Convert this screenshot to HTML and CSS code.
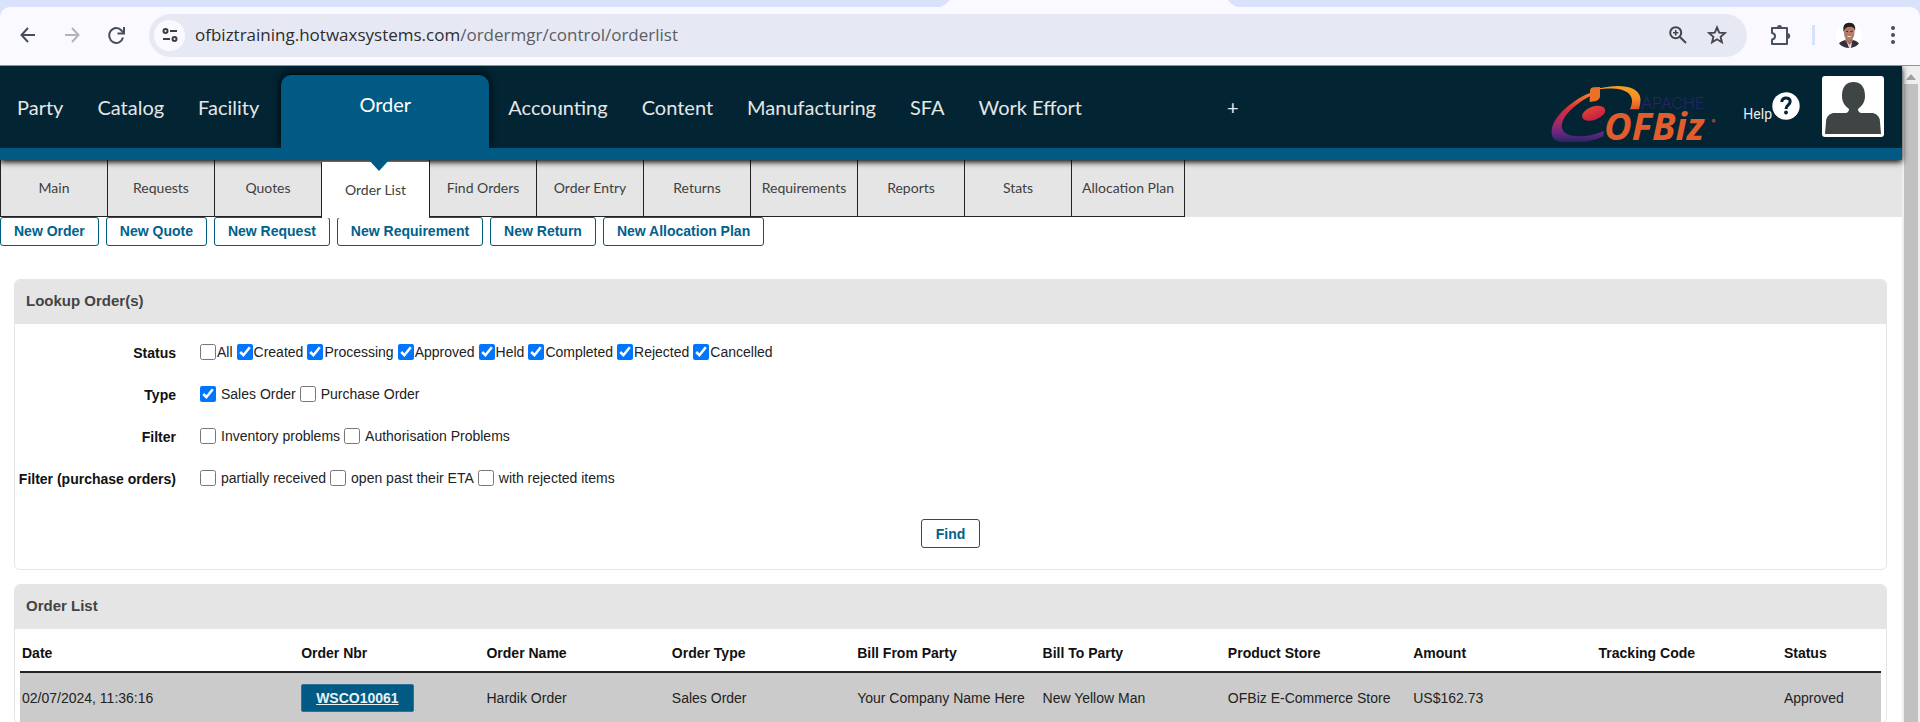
FILE: index.html
```html
<!DOCTYPE html>
<html lang="en">
<head>
<meta charset="utf-8">
<title>OFBiz: Order Manager: Order List</title>
<link rel="stylesheet" href="styles.css">
</head>
<body>
<div class="browser">
  <div class="tabstrip"><span class="active-tab"></span></div>
  <div class="toolbar">
    <button class="tool" type="button" aria-label="Back"><svg width="16" height="20" viewBox="0 0 16 20"><path d="M15 10H2M8 3L1.500 10L8 17" fill="none" stroke="#474d5c" stroke-width="2"/></svg></button>
    <button class="tool" type="button" aria-label="Forward"><svg width="16" height="20" viewBox="0 0 16 20"><path d="M1 10H14M8 3L14.500 10L8 17" fill="none" stroke="#b2b2b8" stroke-width="2"/></svg></button>
    <button class="tool" type="button" aria-label="Reload"><svg width="17" height="20" viewBox="0 0 17 20"><path d="M15 12.500A7 7.500 0 1 1 13.500 5.500L15 7.500" fill="none" stroke="#474d5c" stroke-width="2"/><path d="M16 2V8.500H9.500" fill="none" stroke="#474d5c" stroke-width="2"/></svg></button>
    <div class="omnibox">
      <button class="site-info" type="button" aria-label="Site information"><svg width="16" height="16" viewBox="0 0 16 16" fill="none" stroke="#3b3d42" stroke-width="2"><circle cx="3.500" cy="4" r="2"/><path d="M8 4H15M1 12H8"/><circle cx="12.500" cy="12" r="2"/></svg></button>
      <a class="url" href="#">ofbiztraining.hotwaxsystems.com<span>/ordermgr/control/orderlist</span></a>
      <button class="omni-tool" type="button" aria-label="Zoom"><svg width="18" height="18" viewBox="0 0 18 18" fill="none" stroke="#45464c" stroke-width="2"><circle cx="6.700" cy="6.700" r="5.500"/><path d="M10.700 10.700L17 17"/><path d="M6.700 4V9.400M4 6.700H9.400" stroke-width="1.600"/></svg></button>
      <button class="omni-tool" type="button" aria-label="Bookmark"><svg width="20" height="20" viewBox="0 0 20 20"><path d="M10 2.500L12.200 7.600L17.800 8.100L13.600 11.800L14.900 17.200L10 14.300L5.100 17.200L6.400 11.800L2.200 8.100L7.800 7.600Z" fill="none" stroke="#45464c" stroke-width="1.900"/></svg></button>
    </div>
    <div class="toolbar-end">
      <button class="tool" type="button" aria-label="Extensions"><svg width="22" height="22" viewBox="0 0 22 22"><path d="M3 4H18V20H3V15.500C7 15 7 9.500 3 9Z" fill="none" stroke="#4b505f" stroke-width="2" stroke-linejoin="round"/><path d="M8 4A2.500 3 0 0 1 13 4ZM18 9A3 2.800 0 0 1 18 15Z" fill="#4b505f"/></svg></button>
      <span class="divider"></span>
      <button class="tool" type="button" aria-label="Profile"><svg width="26" height="26" viewBox="0 0 26 26"><defs><clipPath id="round"><circle cx="13" cy="13" r="13"/></clipPath></defs><g clip-path="url(#round)"><rect width="26" height="26" fill="#fff"/><path d="M2 22Q5 19 9 18L13 21L17 18Q22 19 24 23V26H2Z" fill="#33303b"/><path d="M9.500 15H16.500V19L13.500 25L9.500 19Z" fill="#a76d5f"/><path d="M11 20L13 26H15L16 20L13.500 23Z" fill="#e9dce4"/><ellipse cx="13.200" cy="10.800" rx="5.300" ry="7.400" fill="#b57a66"/><path d="M7.500 10Q6 1 12.500 .8Q20.500 0 19 10Q18.500 6 16 5Q10 4 8.500 8Z" fill="#241e21"/><path d="M10 9.500H12M14.500 9.500H16.500" stroke="#493029" stroke-width="1.200"/><path d="M11 14.200Q13.300 16 15.500 14.200Z" fill="#fff"/></g></svg></button>
      <button class="tool" type="button" aria-label="Menu"><svg width="6" height="20" viewBox="0 0 6 20" fill="#474d5c"><circle cx="3" cy="3" r="2"/><circle cx="3" cy="10" r="2"/><circle cx="3" cy="17" r="2"/></svg></button>
    </div>
  </div>
</div>
<div class="viewport">
  <div class="page">
    <header class="masthead">
      <nav class="apps">
        <a href="#">Party</a><a href="#">Catalog</a><a href="#">Facility</a><a class="selected" href="#">Order</a><a href="#">Accounting</a><a href="#">Content</a><a href="#">Manufacturing</a><a href="#">SFA</a><a href="#">Work Effort</a><a class="more" href="#">+</a>
      </nav>
      <div class="controls">
        <svg class="logo" width="168" height="60" viewBox="30 30 504 180" role="img" aria-label="Apache OFBiz">
          <defs>
            <linearGradient id="swirl" x1="0" y1="0" x2="0" y2="1"><stop offset="0" stop-color="#f38b27"/><stop offset=".3" stop-color="#dc3038"/><stop offset=".6" stop-color="#a82864"/><stop offset=".82" stop-color="#672782"/><stop offset="1" stop-color="#2c2463"/></linearGradient>
            <linearGradient id="arc" x1="0" y1="0" x2="0" y2="1"><stop offset="0" stop-color="#f7a021"/><stop offset=".5" stop-color="#f58f25"/><stop offset="1" stop-color="#df542e"/></linearGradient>
            <linearGradient id="core" x1="0" y1="0" x2="0" y2="1"><stop offset="0" stop-color="#e14235"/><stop offset="1" stop-color="#c41e45"/></linearGradient>
          </defs>
          <path d="M152 53C100 72 40 123 35 164C33 188 43 201 72 201L126 201C153 200 174 192 190 184L192 167C159 184 99 191 76 174C48 151 78 103 151 63Z" fill="url(#swirl)"/>
          <path d="M178 40C230 27 296 29 301 69Q303 79 297 103H270C278 82 279 69 267 56C247 38 206 39 178 43Z" fill="url(#arc)"/>
          <path d="M150 45Q151 39 159 37L180 36V66Q179 74 169 78L149 81Z" fill="#ec7128"/>
          <ellipse cx="161" cy="115" rx="36" ry="20" transform="rotate(-20 161 115)" fill="url(#core)"/>
          <text class="logo-apache" x="304" y="102">APACHE</text>
          <text class="logo-name" x="192" y="194">OFBiz</text>
          <circle cx="521" cy="137" r="6" fill="#7e4432"/>
        </svg>
        <a class="help" href="#"><span>Help</span><svg width="28" height="28" viewBox="0 0 28 28"><circle cx="14" cy="14" r="13.700" fill="#fff"/><path d="M9.800 10C9.800 4.500 18.200 4.700 18.200 9.500C18.200 12.700 14 13 14 17" fill="none" stroke="#022433" stroke-width="3"/><circle cx="14" cy="20.500" r="1.900" fill="#022433"/></svg></a>
        <a class="avatar" href="#" aria-label="User"><svg width="56" height="54" viewBox="0 0 56 54"><path d="M17 16C17 6 22 2 28.500 2S40 6 40 16C40 22 37 26 33 29Q33 32 36 33H48Q55 35 55 42L56 54H0L1 42Q1 35 8 33H21Q24 32 24 29C20 26 17 22 17 16Z" fill="#3f4444"/></svg></a>
      </div>
    </header>
    <nav class="subnav">
      <a href="#">Main</a><a href="#">Requests</a><a href="#">Quotes</a><a class="selected" href="#">Order List</a><a href="#">Find Orders</a><a href="#">Order Entry</a><a href="#">Returns</a><a href="#">Requirements</a><a href="#">Reports</a><a href="#">Stats</a><a href="#">Allocation Plan</a>
    </nav>
    <div class="actions">
      <a class="btn" href="#">New Order</a><a class="btn" href="#">New Quote</a><a class="btn" href="#">New Request</a><a class="btn" href="#">New Requirement</a><a class="btn" href="#">New Return</a><a class="btn" href="#">New Allocation Plan</a>
    </div>
    <main>
      <section class="panel">
        <h2>Lookup Order(s)</h2>
        <form class="lookup" onsubmit="return false">
          <div class="field" role="group" aria-labelledby="g1"><span class="name" id="g1">Status</span><div class="options tight">
            <label><input type="checkbox">All</label><label><input type="checkbox" checked>Created</label><label><input type="checkbox" checked>Processing</label><label><input type="checkbox" checked>Approved</label><label><input type="checkbox" checked>Held</label><label><input type="checkbox" checked>Completed</label><label><input type="checkbox" checked>Rejected</label><label><input type="checkbox" checked>Cancelled</label></div></div>
          <div class="field" role="group" aria-labelledby="g2"><span class="name" id="g2">Type</span><div class="options">
            <label><input type="checkbox" checked>Sales Order</label><label><input type="checkbox">Purchase Order</label></div></div>
          <div class="field" role="group" aria-labelledby="g3"><span class="name" id="g3">Filter</span><div class="options">
            <label><input type="checkbox">Inventory problems</label><label><input type="checkbox">Authorisation Problems</label></div></div>
          <div class="field" role="group" aria-labelledby="g4"><span class="name" id="g4">Filter (purchase orders)</span><div class="options">
            <label><input type="checkbox">partially received</label><label><input type="checkbox">open past their ETA</label><label><input type="checkbox">with rejected items</label></div></div>
          <div class="submit"><button class="btn" type="submit">Find</button></div>
        </form>
      </section>
      <section class="panel">
        <h2>Order List</h2>
        <table>
          <colgroup><col class="wide"><col span="8" class="mid"><col></colgroup>
          <thead><tr><th>Date</th><th>Order Nbr</th><th>Order Name</th><th>Order Type</th><th>Bill From Party</th><th>Bill To Party</th><th>Product Store</th><th>Amount</th><th>Tracking Code</th><th>Status</th></tr></thead>
          <tbody><tr><td>02/07/2024, 11:36:16</td><td><a class="order-link" href="#">WSCO10061</a></td><td>Hardik Order</td><td>Sales Order</td><td>Your Company Name Here</td><td>New Yellow Man</td><td>OFBiz E-Commerce Store</td><td>US$162.73</td><td></td><td>Approved</td></tr></tbody>
        </table>
      </section>
    </main>
  </div>
  <div class="scrollbar"><svg width="10" height="6" viewBox="0 0 10 6"><path d="M0 6L5 0L10 6Z" fill="#a0a0a0"/></svg><div class="thumb"></div></div>
</div>
</body>
</html>
```
FILE: styles.css
```css
* { box-sizing: border-box; }
body {
  margin: 0;
  height: 100vh;
  overflow: hidden;
  display: flex;
  flex-direction: column;
  background: #fff;
  color: #222;
  font: 14px/18px "Liberation Sans", Arial, sans-serif;
}
a { color: inherit; text-decoration: none; }
button { font: inherit; cursor: pointer; }
svg { display: block; flex: none; }

.browser { flex: none; background: #dae2fb; }
.tabstrip { height: 7px; padding-left: 49%; }
.active-tab { display: block; width: 296px; height: 7px; background: #faf9ff; clip-path: polygon(0 100%, 2% 50%, 3% 0, 97% 0, 98% 50%, 100% 100%); }
.toolbar {
  display: flex;
  align-items: center;
  height: 59px;
  padding: 0 24px 2px 20px;
  background: #faf9ff;
  border-bottom: 1px solid #8b959d;
  border-radius: 10px 10px 0 0;
}
.tool, .site-info, .omni-tool { padding: 0; border: 0; background: none; flex: none; }
.toolbar > .tool { margin-right: 28px; }
.omnibox {
  flex: 1;
  display: flex;
  align-items: center;
  height: 43px;
  padding: 0 20px 0 5px;
  margin-left: -4px;
  background: #e6e9f3;
  border-radius: 22px;
}
.site-info { display: grid; place-items: center; width: 31px; height: 31px; border-radius: 50%; background: #faf9ff; }
.url { flex: 1; margin-left: 10px; font: 17px/24px "Open Sans", "Noto Sans", sans-serif; color: #2c2d31; white-space: nowrap; }
.url span { color: #5b5d63; }
.omni-tool { margin-left: 20px; }
.toolbar-end { display: flex; align-items: center; gap: 21px; margin-left: 22px; }
.toolbar-end .tool:last-child { margin-left: 7px; }
.divider { width: 3px; height: 20px; background: #d6e2fb; }

.viewport { flex: 1; display: flex; min-height: 0; overflow: hidden; }
.page { flex: 1; min-width: 0; }
.scrollbar { display: flex; flex-direction: column; align-items: center; width: 18px; padding-top: 8px; background: #efefef; }
.thumb { flex: 1; width: 14px; margin-top: 4px; background: #c1c1c1; }

.masthead {
  position: relative;
  z-index: 2;
  display: flex;
  justify-content: space-between;
  height: 94px;
  background: #022433;
  border-bottom: 12px solid #005a83;
  box-shadow: 0 2px 6px #000;
}
.apps { display: flex; align-items: stretch; font: 20px/82px Lato, sans-serif; color: #e6e6e6; white-space: nowrap; }
.apps a { padding: 0 17px; }
.apps .selected {
  width: 208px;
  margin: 9px 2px 0 5px;
  line-height: 58px;
  text-align: center;
  color: #fff;
  background: #005a83;
  border-radius: 10px 10px 0 0;
  box-shadow: 0 -1px 9px #000;
  clip-path: inset(-12px -12px 0);
}
.apps .more { margin-left: 111px; }
.controls { display: flex; align-items: flex-start; margin-right: 18px; }
.logo { margin-top: 19px; }
.logo-apache { font: 300 48px Inter, sans-serif; fill: #2a2560; }
.logo-name { font: italic 700 114px "Open Sans", sans-serif; fill: #e35c2d; }
.help { display: flex; margin: 26px 22px 0 25px; color: #e9eef0; font: 14px/18px Roboto, sans-serif; }
.help span { margin-top: 13px; }
.avatar { display: flex; justify-content: center; align-items: flex-end; width: 62px; height: 61px; margin-top: 10px; padding-bottom: 3px; background: #fff; border-radius: 3px; }

.subnav { display: flex; height: 57px; background: #e5e5e5; font: 14px/55px Lato, sans-serif; color: #404040; }
.subnav a { width: 107px; border: solid #222; border-width: 0 0 1px 1px; text-align: center; white-space: nowrap; }
.subnav a:last-child { width: 114px; border-right-width: 1px; }
.subnav .selected { position: relative; z-index: 3; width: 108px; margin-top: 2px; height: 56px; background: #fff; border-bottom: 0; }
.subnav .selected::before { content: ""; position: absolute; top: -3px; left: 46px; border: solid transparent; border-width: 12px 11px 0; border-top-color: #005a83; }

.actions { display: flex; gap: 7px; padding-bottom: 33px; }
.btn { height: 29px; padding: 0 14px; border: 1px solid #005a83; border-radius: 3px; background: #fff; color: #00618c; font-weight: bold; line-height: 26px; white-space: nowrap; }
.actions .btn { padding: 0 13px; }

main { display: flex; flex-direction: column; gap: 14px; padding: 0 15px 0 14px; }
.panel { border: 1px solid #e5e5e5; border-radius: 6px; }
.panel h2 { margin: 0; padding: 12px 11px 14px; background: #e5e5e5; border-radius: 5px 5px 0 0; color: #444; font-size: 15px; line-height: 18px; }
.lookup { padding: 7px 1px 21px; }
.field { display: flex; align-items: center; height: 42px; }
.name { width: 160px; margin-right: 24px; text-align: right; font-weight: bold; color: #111; white-space: nowrap; padding-top: 2px; }
.options { display: flex; gap: 4px; }
.options label { display: flex; align-items: center; gap: 5px; white-space: nowrap; }
.options.tight label { gap: 1px; }
.options input { width: 16px; height: 16px; margin: 0; accent-color: #0075ff; }
.submit { display: flex; justify-content: center; padding-top: 20px; }

table { width: calc(100% - 10px); margin: 0 5px; border-collapse: collapse; table-layout: fixed; white-space: nowrap; }
.wide { width: 15%; }
.mid { width: 9.96%; }
th, td { padding: 0 2px; text-align: left; }
th { height: 43px; padding-top: 6px; color: #111; border-bottom: 2px solid #222; }
td { height: 51px; background: #cbcbcb; }
.order-link { display: inline-block; padding: 0 14px; background: #005a83; border: 1px solid #2d7396; border-radius: 2px; color: #e8f1f5; font-weight: bold; line-height: 26px; text-decoration: underline; }
```
